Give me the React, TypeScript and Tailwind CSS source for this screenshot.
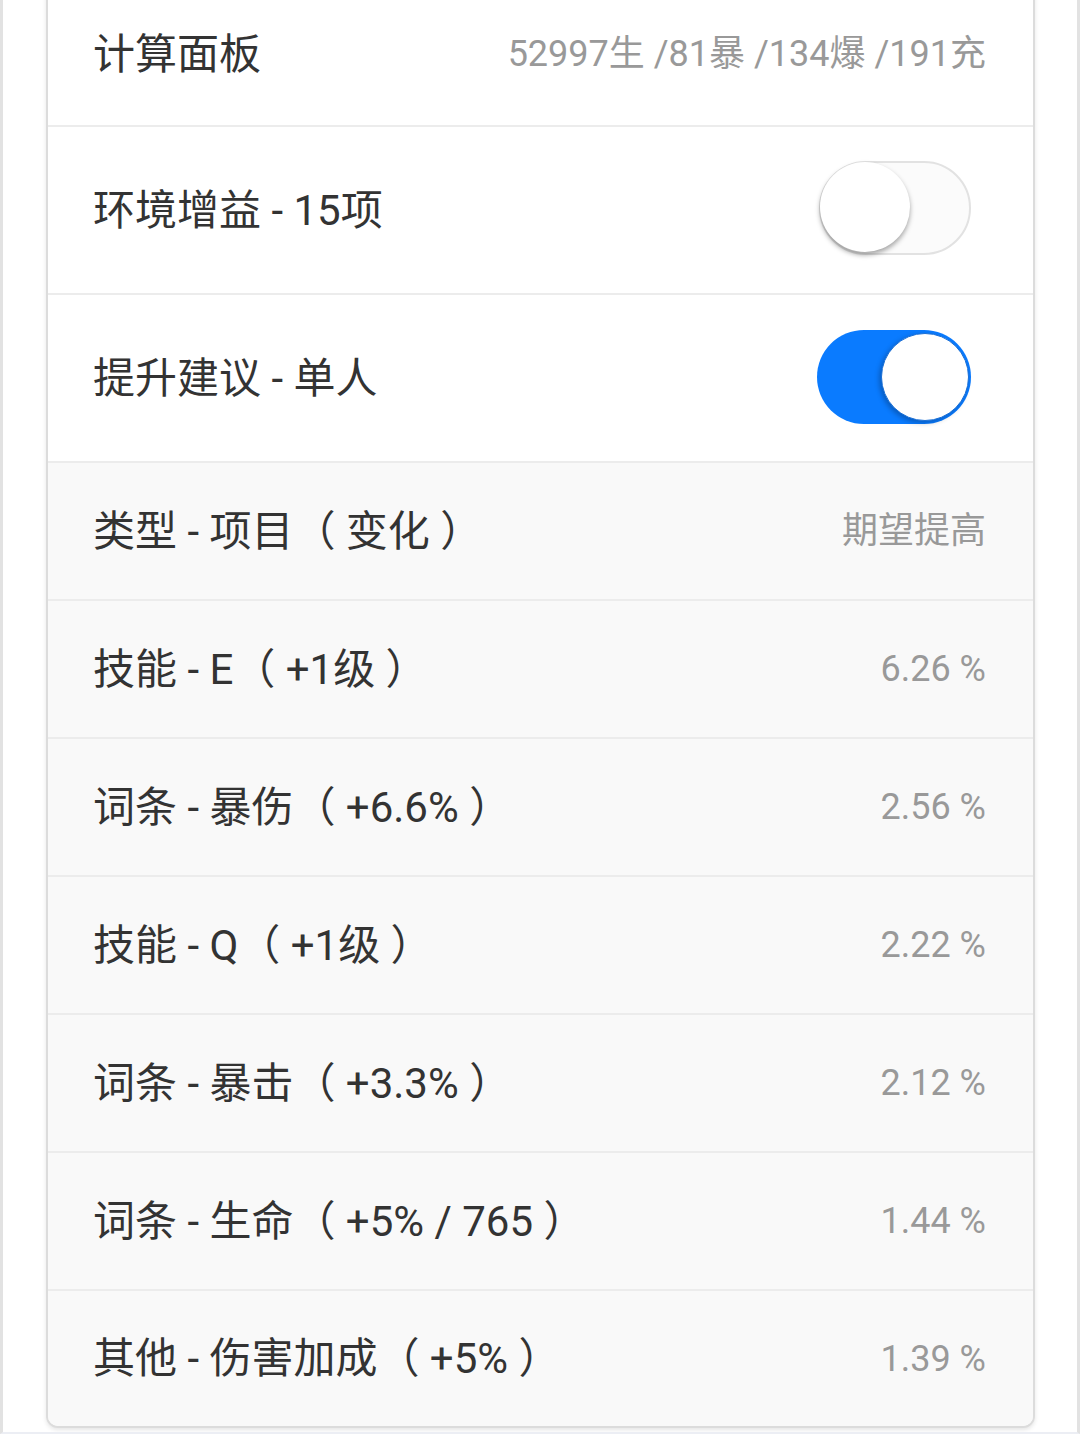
import React from "react";

const font = { fontFamily: "Roboto, 'Noto Sans CJK SC', sans-serif" };

const rows = [
  { label: "技能 - E（ +1级 ）", value: "6.26 %" },
  { label: "词条 - 暴伤（ +6.6% ）", value: "2.56 %" },
  { label: "技能 - Q（ +1级 ）", value: "2.22 %" },
  { label: "词条 - 暴击（ +3.3% ）", value: "2.12 %" },
  { label: "词条 - 生命（ +5% / 765 ）", value: "1.44 %" },
  { label: "其他 - 伤害加成（ +5% ）", value: "1.39 %" },
];

/* ios style switch */
const Toggle = ({ on }: { on: boolean }) => (
  <div
    className={
      on
        ? "relative w-[154px] h-[94px] mr-[15px] mb-[3px] rounded-full bg-[#0a7bff]"
        : "relative w-[152px] h-[94px] mr-[15px] mb-[4px] rounded-full bg-[#fbfbfb] border-2 border-[#e2e2e2]"
    }
  >
    {on ? (
      <div className="absolute right-[2px] top-[3px] size-[88px] rounded-full bg-white border border-[#1a6fd6] shadow-[-2px_2px_5px_rgba(0,0,0,0.25)]" />
    ) : (
      <div className="absolute left-[-1px] top-[-1px] size-[90px] rounded-full bg-white shadow-[0_3px_5px_rgba(0,0,0,0.35)]" />
    )}
  </div>
);

export default function App() {
  return (
    <div className="w-[1080px] min-h-[1452px] bg-white" style={font}>
      <div className="h-[1434px] border-x-[3px] border-x-[#e2e2e2] border-b-2 border-b-[#eceef4] overflow-hidden">
        <div className="-mt-[19px] ml-[43px] mr-[42px] border-2 border-[#dcdcdc] rounded-b-[12px] bg-white shadow-[0_2px_4px_rgba(0,0,0,0.1)] overflow-hidden">
          {/* header */}
          <div className="h-[142px] flex items-center justify-between pl-[45px] pr-[47px]">
            <span className="text-[42px] text-[#333]">计算面板</span>
            <span className="text-[36px] text-[#999]">52997生 /81暴 /134爆 /191充</span>
          </div>
          <div className="h-[168px] border-t-2 border-[#ececec] flex items-center justify-between pl-[45px] pr-[47px]">
            <span className="text-[42px] text-[#333]">环境增益 - 15项</span>
            <Toggle on={false} />
          </div>
          <div className="h-[168px] border-t-2 border-[#ececec] flex items-center justify-between pl-[45px] pr-[47px]">
            <span className="text-[42px] text-[#333]">提升建议 - 单人</span>
            <Toggle on={true} />
          </div>
          {/* suggestions */}
          <div className="bg-[#f9f9f9]">
            <div className="h-[138px] border-t-2 border-[#ececec] flex items-center justify-between pl-[45px] pr-[47px]">
              <span className="text-[42px] text-[#333]">类型 - 项目（ 变化 ）</span>
              <span className="text-[36px] text-[#999]">期望提高</span>
            </div>
            {rows.map((r, i) => (
              <div
                key={r.label}
                className={
                  i === rows.length - 1
                    ? "h-[137px] border-t-2 border-[#ececec] flex items-center justify-between pl-[45px] pr-[47px]"
                    : "h-[138px] border-t-2 border-[#ececec] flex items-center justify-between pl-[45px] pr-[47px]"
                }
              >
                <span className="text-[42px] text-[#333]">{r.label}</span>
                <span className="text-[36px] text-[#999]">{r.value}</span>
              </div>
            ))}
          </div>
        </div>
      </div>
    </div>
  );
}
